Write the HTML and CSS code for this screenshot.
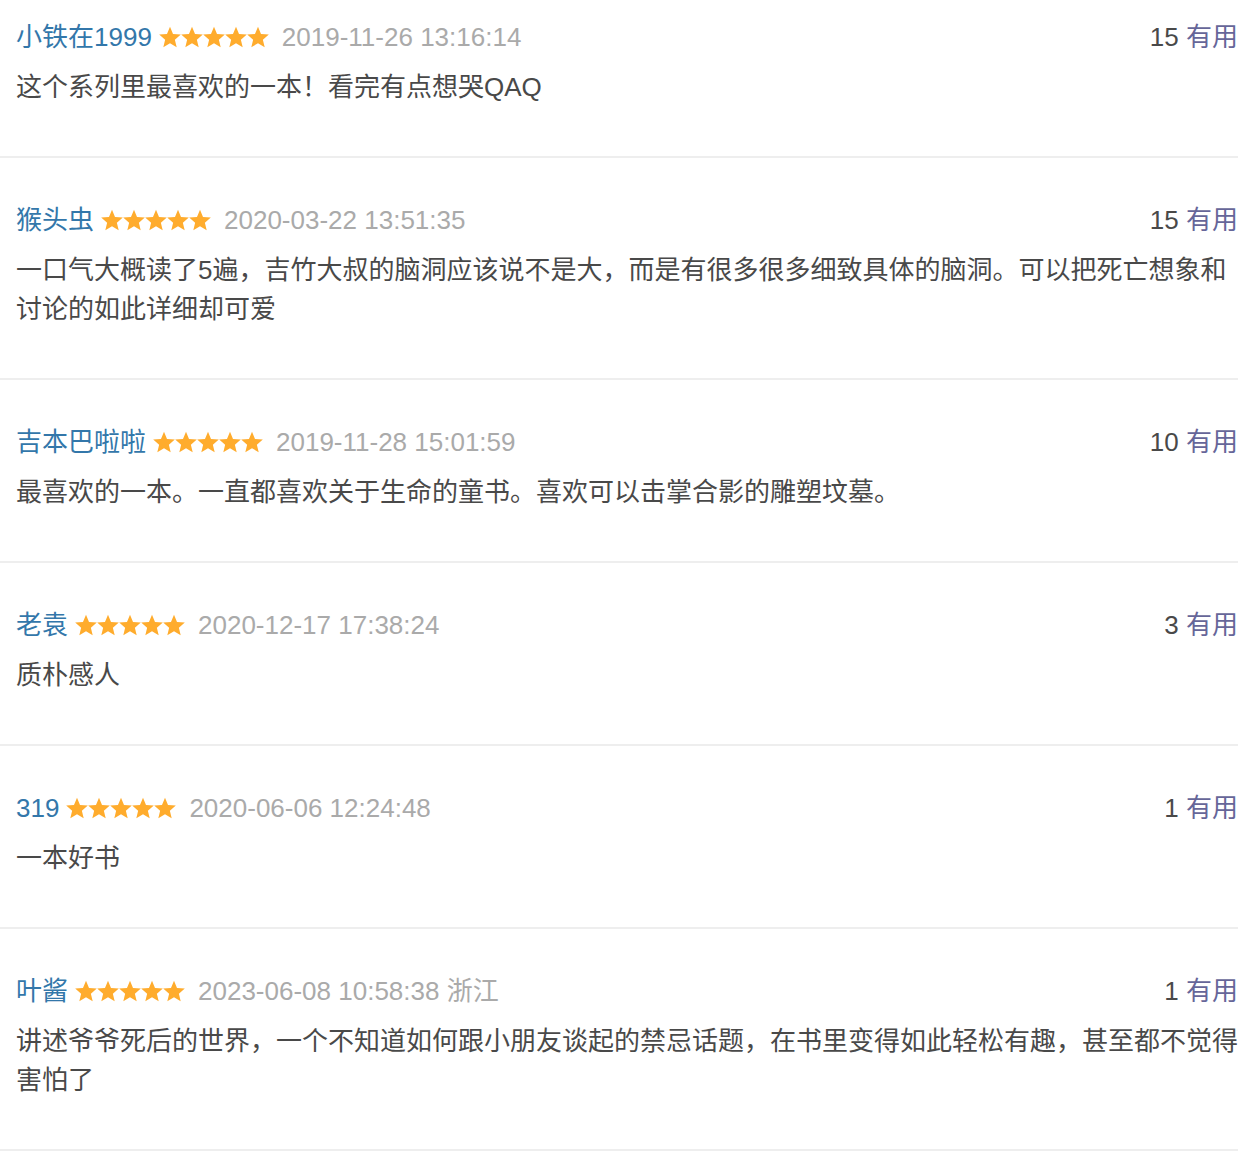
FILE: index.html
```html
<!DOCTYPE html>
<html lang="zh-CN">
<head>
    <meta charset="UTF-8">
    <meta name="viewport" content="width=device-width, initial-scale=1.0">
    <title>短评</title>
    <link rel="stylesheet" href="styles.css">
</head>
<body>
    <svg class="defs" width="0" height="0">
        <symbol id="star" viewBox="0.4 0.4 23.2 22.2">
            <path d="M12 .6L15.17 8.23 23.41 8.89 17.14 14.27 19.05 22.31 12 18 4.95 22.31 6.86 14.27 .59 8.89 8.83 8.23z"/>
        </symbol>
    </svg>

    <div class="comments">
        <div class="comment">
            <div class="comment-info">
                <a class="user" href="#">小铁在1999</a>
                <span class="stars"><svg><use href="#star"/></svg><svg><use href="#star"/></svg><svg><use href="#star"/></svg><svg><use href="#star"/></svg><svg><use href="#star"/></svg></span>
                <span class="time">2019-11-26 13:16:14</span>
                <span class="vote"><span class="count">15</span> <a href="#">有用</a></span>
            </div>
            <p class="content">这个系列里最喜欢的一本！看完有点想哭QAQ</p>
        </div>

        <div class="comment">
            <div class="comment-info">
                <a class="user" href="#">猴头虫</a>
                <span class="stars"><svg><use href="#star"/></svg><svg><use href="#star"/></svg><svg><use href="#star"/></svg><svg><use href="#star"/></svg><svg><use href="#star"/></svg></span>
                <span class="time">2020-03-22 13:51:35</span>
                <span class="vote"><span class="count">15</span> <a href="#">有用</a></span>
            </div>
            <p class="content">一口气大概读了5遍，吉竹大叔的脑洞应该说不是大，而是有很多很多细致具体的脑洞。可以把死亡想象和讨论的如此详细却可爱</p>
        </div>

        <div class="comment">
            <div class="comment-info">
                <a class="user" href="#">吉本巴啦啦</a>
                <span class="stars"><svg><use href="#star"/></svg><svg><use href="#star"/></svg><svg><use href="#star"/></svg><svg><use href="#star"/></svg><svg><use href="#star"/></svg></span>
                <span class="time">2019-11-28 15:01:59</span>
                <span class="vote"><span class="count">10</span> <a href="#">有用</a></span>
            </div>
            <p class="content">最喜欢的一本。一直都喜欢关于生命的童书。喜欢可以击掌合影的雕塑坟墓。</p>
        </div>

        <div class="comment">
            <div class="comment-info">
                <a class="user" href="#">老袁</a>
                <span class="stars"><svg><use href="#star"/></svg><svg><use href="#star"/></svg><svg><use href="#star"/></svg><svg><use href="#star"/></svg><svg><use href="#star"/></svg></span>
                <span class="time">2020-12-17 17:38:24</span>
                <span class="vote"><span class="count">3</span> <a href="#">有用</a></span>
            </div>
            <p class="content">质朴感人</p>
        </div>

        <div class="comment">
            <div class="comment-info">
                <a class="user" href="#">319</a>
                <span class="stars"><svg><use href="#star"/></svg><svg><use href="#star"/></svg><svg><use href="#star"/></svg><svg><use href="#star"/></svg><svg><use href="#star"/></svg></span>
                <span class="time">2020-06-06 12:24:48</span>
                <span class="vote"><span class="count">1</span> <a href="#">有用</a></span>
            </div>
            <p class="content">一本好书</p>
        </div>

        <div class="comment">
            <div class="comment-info">
                <a class="user" href="#">叶酱</a>
                <span class="stars"><svg><use href="#star"/></svg><svg><use href="#star"/></svg><svg><use href="#star"/></svg><svg><use href="#star"/></svg><svg><use href="#star"/></svg></span>
                <span class="time">2023-06-08 10:58:38 浙江</span>
                <span class="vote"><span class="count">1</span> <a href="#">有用</a></span>
            </div>
            <p class="content">讲述爷爷死后的世界，一个不知道如何跟小朋友谈起的禁忌话题，在书里变得如此轻松有趣，甚至都不觉得害怕了</p>
        </div>
    </div>
</body>
</html>
```

FILE: styles.css
```css
/* 短评列表 */
body {
    margin: 0;
    background-color: #ffffff;
    font-family: 'Liberation Sans', 'Noto Sans CJK SC', sans-serif;
    font-size: 26px;
    color: #494949;
}

.defs {
    position: absolute;
    width: 0;
    height: 0;
}

a {
    text-decoration: none;
}

.comments {
    width: 1238px;
}

.comment {
    padding: 44px 0 49px 16px;
    border-bottom: 2px solid #eeeeee;
}

.comment:first-child {
    padding-top: 19px;
}

.comment-info {
    display: flex;
    align-items: center;
    height: 36px;
    line-height: 36px;
    white-space: nowrap;
}

.user {
    color: #3377aa;
}

.stars {
    display: flex;
    margin: 0 13px 0 7px;
}

.stars svg {
    width: 22px;
    height: 22px;
    fill: #ffac2d;
}

.time {
    color: #aaaaaa;
}

.vote {
    margin-left: auto;
}

.vote .count {
    color: #494949;
}

.vote a {
    color: #666699;
}

.content {
    margin: 13px 0 0;
    line-height: 39px;
}
```
